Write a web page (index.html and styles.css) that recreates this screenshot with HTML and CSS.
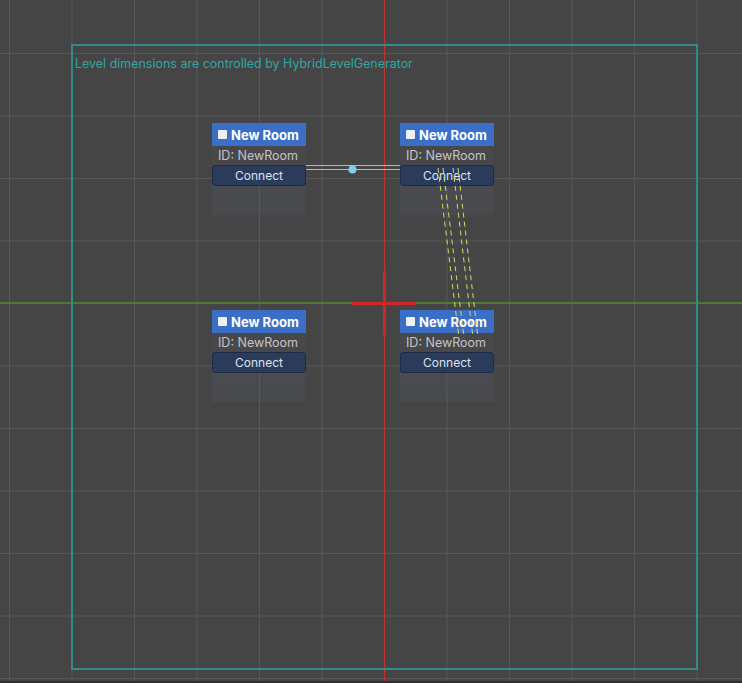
FILE: index.html
```html
<!DOCTYPE html>
<html lang="en">
  <head>
    <meta charset="UTF-8" />
    <meta name="viewport" content="width=device-width, initial-scale=1.0" />
    <title>Level Editor</title>
    <link rel="stylesheet" href="styles.css">
  </head>
  <body>
    <div class="level-view">
      <!-- World axes, under everything else -->
      <svg class="layer" width="742" height="683" viewBox="0 0 742 683">
        <line x1="0" y1="303" x2="742" y2="303" stroke="#4b8a2e" stroke-width="1.5" />
        <line x1="384.5" y1="0" x2="384.5" y2="683" stroke="#c23434" stroke-width="1" />
        <rect x="383" y="271" width="3" height="64" fill="#d02828" />
        <rect x="352" y="302" width="64" height="3" fill="#d02828" />
      </svg>

      <!-- Level bounds -->
      <div class="level-bounds">
        <p class="bounds-note">Level dimensions are controlled by HybridLevelGenerator</p>
      </div>

      <!-- Rooms -->
      <div class="room room-a">
        <div class="room-header"><span class="room-check"></span>New Room</div>
        <div class="room-id">ID: NewRoom</div>
        <button class="connect-button">Connect</button>
      </div>
      <div class="room room-b">
        <div class="room-header"><span class="room-check"></span>New Room</div>
        <div class="room-id">ID: NewRoom</div>
        <button class="connect-button">Connect</button>
      </div>
      <div class="room room-c">
        <div class="room-header"><span class="room-check"></span>New Room</div>
        <div class="room-id">ID: NewRoom</div>
        <button class="connect-button">Connect</button>
      </div>
      <div class="room room-d">
        <div class="room-header"><span class="room-check"></span>New Room</div>
        <div class="room-id">ID: NewRoom</div>
        <button class="connect-button">Connect</button>
      </div>

      <!-- Connections, drawn over the rooms -->
      <svg class="layer" width="742" height="683" viewBox="0 0 742 683">
        <g stroke="#a9bccf" stroke-width="1">
          <line x1="306" y1="165.5" x2="400" y2="165.5" />
          <line x1="306" y1="169.5" x2="400" y2="169.5" />
        </g>
        <circle cx="352.5" cy="169.5" r="4" fill="#80cdf2" />
        <g stroke="#d6dc5c" stroke-width="1" stroke-dasharray="5 4">
          <line x1="438" y1="168" x2="459" y2="338" />
          <line x1="443" y1="168" x2="464" y2="338" />
          <line x1="453" y1="168" x2="473" y2="338" />
          <line x1="458" y1="168" x2="478" y2="338" />
        </g>
      </svg>
    </div>
  </body>
</html>
```

FILE: styles.css
```css
* {
  margin: 0;
  padding: 0;
  box-sizing: border-box;
}

html,
body {
  width: 100%;
  height: 100%;
  background-color: #454545;
  font-family: 'Inter', 'Noto Sans', sans-serif;
}

.level-view {
  position: relative;
  width: 742px;
  height: 683px;
  overflow: hidden;
  background-color: #454545;
  background-image:
    linear-gradient(to right, #575757 1px, transparent 1px),
    linear-gradient(to bottom, #575757 1px, transparent 1px);
  background-size: 62.5px 62.5px;
  background-position: 9px 53px;
  border-bottom: 2px solid #2e2e2e;
}

.layer {
  position: absolute;
  top: 0;
  left: 0;
  pointer-events: none;
}

.level-bounds {
  position: absolute;
  left: 71px;
  top: 44px;
  width: 627px;
  height: 626px;
  border: 2px solid #338a8a;
}

.bounds-note {
  margin: 10px 0 0 2px;
  font-size: 12.4px;
  color: #2ea8a4;
  letter-spacing: 0.04px;
}

/* Room node */
.room {
  position: absolute;
  width: 94px;
  height: 92px;
  display: flex;
  flex-direction: column;
  background: linear-gradient(to bottom, rgba(88, 96, 118, 0.3), rgba(88, 96, 118, 0.18));
}

.room-a { left: 212px; top: 123px; }
.room-b { left: 400px; top: 123px; }
.room-c { left: 212px; top: 310px; }
.room-d { left: 400px; top: 310px; }

.room-header {
  height: 23px;
  display: flex;
  align-items: center;
  gap: 4px;
  padding-left: 6px;
  background-color: #3b6ec6;
  color: #ffffff;
  font-size: 13px;
  font-weight: 700;
}

.room-check {
  width: 9px;
  height: 9px;
  background-color: #eef0f5;
  border-radius: 1px;
}

.room-id {
  height: 19px;
  padding-left: 6px;
  display: flex;
  align-items: center;
  color: #c2c4c8;
  font-size: 12.5px;
  white-space: nowrap;
  overflow: hidden;
  background-color: #48484b;
}

.connect-button {
  height: 21px;
  border: 1px solid #1d2a42;
  border-radius: 3px;
  background-color: #2a3b5c;
  color: #dfe4ee;
  font-family: 'Inter', 'Noto Sans', sans-serif;
  font-size: 12px;
}
```
